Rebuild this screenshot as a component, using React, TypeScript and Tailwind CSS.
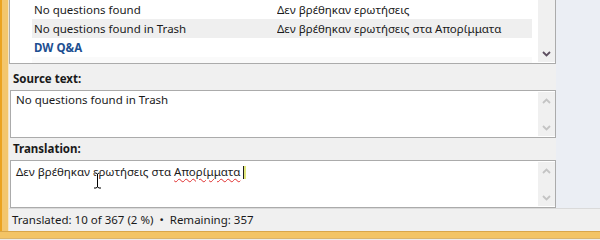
import React from 'react';

const font = { fontFamily: '"Noto Sans", "DejaVu Sans", sans-serif' };

function Chevron({ up, color }: { up?: boolean; color: string }) {
  return (
    <svg width="9" height="6" viewBox="0 0 9 6">
      <path
        d={up ? 'M1 5 L4.5 1.5 L8 5' : 'M1 1 L4.5 4.5 L8 1'}
        fill="none"
        stroke={color}
        strokeWidth="1.8"
      />
    </svg>
  );
}

function BoxScrollbar() {
  return (
    <div className="w-[17px] my-[1px] bg-[#f0f0f0] flex flex-col justify-between">
      <div className="h-[17px] flex items-center justify-center">
        <Chevron up color="#c4c4c4" />
      </div>
      <div className="h-[17px] flex items-center justify-center">
        <Chevron color="#c4c4c4" />
      </div>
    </div>
  );
}

function IBeam() {
  return (
    <svg className="absolute left-[82px] top-[11px]" width="9" height="17" viewBox="0 0 9 17">
      <path
        d="M1 1 H3 L4.5 2 L6 1 H8 M4.5 2 V15 M1 16 H3 L4.5 15 L6 16 H8"
        fill="none"
        stroke="#ffffff"
        strokeWidth="2.6"
      />
      <path
        d="M1 1 H3 L4.5 2 L6 1 H8 M4.5 2 V15 M1 16 H3 L4.5 15 L6 16 H8"
        fill="none"
        stroke="#000000"
        strokeWidth="1"
      />
    </svg>
  );
}

function Row({ source, target, active }: { source: string; target: string; active?: boolean }) {
  return (
    <div className={`h-[19px] flex items-center ${active ? 'bg-[#efefef]' : ''}`}>
      <div className="w-[245px] pl-[2px] truncate">{source}</div>
      <div className="flex-1 truncate">{target}</div>
    </div>
  );
}

export default function App() {
  return (
    <div
      className="w-[600px] h-[240px] flex flex-col overflow-hidden bg-[#f0f0f0] text-[11.5px] leading-[16px] text-[#1a1a1a]"
      style={font}
    >
      <div className="flex-1 flex min-h-0">
        {/* window edge */}
        <div className="w-[2px] bg-[#eba320]" />
        <div className="w-[6px] bg-[#f3c66d]" />
        <div className="w-[1px] bg-[#f5e6c8]" />

        <div className="flex-1 flex flex-col min-w-0">
          <div className="flex-1 flex min-h-0">
            {/* main panel */}
            <div className="w-[547px] flex flex-col bg-[#f0f0f0]">
              {/* string list */}
              <div className="h-[64px] flex bg-white border-x border-b border-[#ababab]">
                <div className="flex-1 pl-[22px] pr-[6px] flex flex-col">
                  <Row source="No questions found" target="Δεν βρέθηκαν ερωτήσεις" />
                  <Row
                    source="No questions found in Trash"
                    target="Δεν βρέθηκαν ερωτήσεις στα Απορίμματα"
                    active
                  />
                  <div className="h-[19px] flex items-center pl-[2px] font-bold text-[#1d4f91]">DW Q&amp;A</div>
                  <div className="flex-1 bg-[#fafafa]" />
                </div>
                <div className="w-[17px] mb-[1px] bg-[#f0f0f0] flex flex-col justify-end">
                  <div className="h-[17px] flex items-center justify-center">
                    <Chevron color="#5d4f60" />
                  </div>
                </div>
              </div>

              <div className="h-[26px] pt-[7px] pl-[4px] font-bold">Source text:</div>
              <div className="h-[48px] ml-[1px] flex bg-white border border-[#ababab]">
                <div className="flex-1 pl-[5px] pt-[1px]">No questions found in Trash</div>
                <BoxScrollbar />
              </div>

              <div className="h-[22px] pt-[3px] pl-[4px] font-bold">Translation:</div>
              <div className="h-[48px] ml-[1px] flex bg-white border border-[#ababab]">
                <div className="relative flex-1 pl-[5px] pt-[3px]">
                  Δεν βρέθηκαν ερωτήσεις στα{' '}
                  <span className="underline decoration-wavy decoration-[#e03030] decoration-1 underline-offset-2">
                    Απορίμματα
                  </span>
                  <span className="inline-block align-middle ml-[3px] w-[3px] h-[13px] border-l border-[#202020] bg-[#e2e87c]" />
                  <IBeam />
                </div>
                <BoxScrollbar />
              </div>
            </div>
            <div className="flex-1 bg-[#ebeef4]" />
          </div>

          {/* status bar */}
          <div className="h-[23px] flex items-center pl-[3px] border-t border-[#dadada] bg-[#f0f0f0]">
            <span>Translated: 10 of 367 (2 %)</span>
            <span className="mx-[6px]">•</span>
            <span>Remaining: 357</span>
          </div>
        </div>
      </div>

      {/* bottom window edge */}
      <div className="h-[9px] flex flex-col">
        <div className="h-[1px] bg-[#d9a64a]" />
        <div className="h-[6px] bg-[#f3c466]" />
        <div className="h-[1px] bg-[#dcb46a]" />
        <div className="h-[1px] bg-[#ececec]" />
      </div>
    </div>
  );
}
